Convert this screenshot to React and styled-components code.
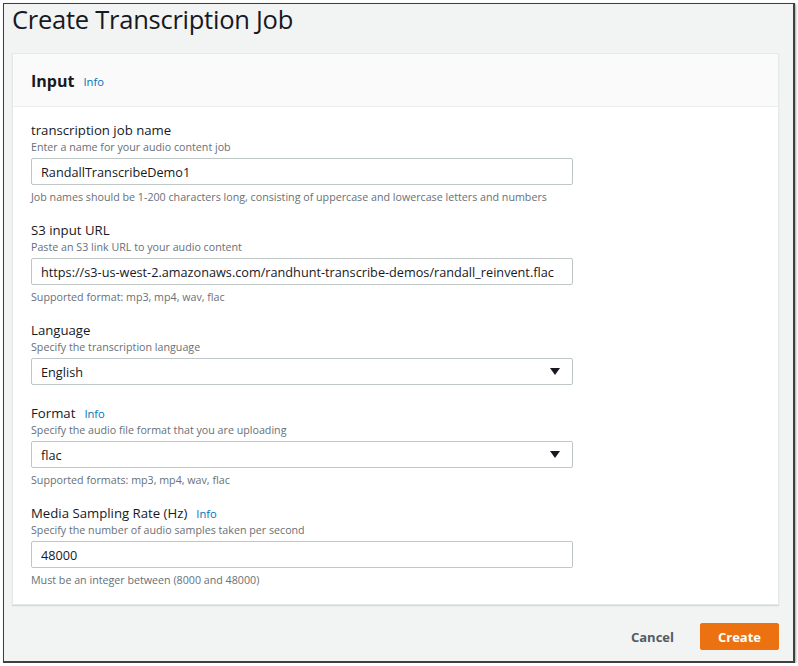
import React from 'react';
import styled, { createGlobalStyle } from 'styled-components';

const GlobalStyle = createGlobalStyle`
  html, body {
    margin: 0;
    padding: 0;
    background: #ffffff;
  }
  body {
    font-family: "Open Sans", "Liberation Sans", sans-serif;
    color: #16191f;
  }
`;

const fields = [
  {
    label: 'transcription job name',
    hint: 'Enter a name for your audio content job',
    value: 'RandallTranscribeDemo1',
    help: 'Job names should be 1-200 characters long, consisting of uppercase and lowercase letters and numbers',
  },
  {
    label: 'S3 input URL',
    hint: 'Paste an S3 link URL to your audio content',
    value: 'https://s3-us-west-2.amazonaws.com/randhunt-transcribe-demos/randall_reinvent.flac',
    help: 'Supported format: mp3, mp4, wav, flac',
  },
  {
    label: 'Language',
    hint: 'Specify the transcription language',
    value: 'English',
    select: true,
  },
  {
    label: 'Format',
    info: true,
    hint: 'Specify the audio file format that you are uploading',
    value: 'flac',
    select: true,
    help: 'Supported formats: mp3, mp4, wav, flac',
  },
  {
    label: 'Media Sampling Rate (Hz)',
    info: true,
    hint: 'Specify the number of audio samples taken per second',
    value: '48000',
    help: 'Must be an integer between (8000 and 48000)',
  },
];

const App = () => {
  return (
    <>
      <GlobalStyle />
      <Frame>
        <Title>Create Transcription Job</Title>
        <Panel>
          <PanelHeader>
            <PanelTitle>Input</PanelTitle>
            <InfoLink>Info</InfoLink>
          </PanelHeader>
          <PanelBody>
            {fields.map(field => (
              <Field key={field.label} $bare={!field.help}>
                <Label>
                  {field.label}
                  {field.info && <InfoLink>Info</InfoLink>}
                </Label>
                <Hint>{field.hint}</Hint>
                <InputBox>
                  <Value>{field.value}</Value>
                  {field.select && <Caret />}
                </InputBox>
                {field.help && <Help>{field.help}</Help>}
              </Field>
            ))}
          </PanelBody>
        </Panel>
        <Footer>
          <CancelButton>Cancel</CancelButton>
          <CreateButton>Create</CreateButton>
        </Footer>
      </Frame>
    </>
  );
};

const Frame = styled.div`
  box-sizing: border-box;
  margin: 3px 0 0 3px;
  width: 792px;
  height: 660px;
  border: 1px solid #3f3f3f;
  border-width: 1px 2px 2px 1px;
  box-shadow: 1px 1px 2px rgba(0, 0, 0, 0.35);
  background: #f2f3f3;
  padding: 0 14px 0 8px;
  display: flex;
  flex-direction: column;
`;

const Title = styled.h1`
  margin: 0;
  height: 49px;
  font-size: 25.5px;
  font-weight: 400;
  line-height: 30px;
  color: #16191f;
  letter-spacing: -0.25px;
`;

const Panel = styled.div`
  background: #ffffff;
  border: 1px solid #e6e9e9;
  box-shadow: 0 1px 1px rgba(0, 28, 36, 0.12);
`;

const PanelHeader = styled.div`
  height: 53px;
  box-sizing: border-box;
  background: #fafafa;
  border-bottom: 1px solid #eaeded;
  display: flex;
  align-items: center;
  padding: 2px 18px 0;
`;

const PanelTitle = styled.h2`
  margin: 0;
  font-size: 16px;
  font-weight: 700;
  color: #16191f;
`;

const InfoLink = styled.a`
  margin-left: 9px;
  font-size: 11.2px;
  color: #0073bb;
  font-weight: 400;
`;

const PanelBody = styled.div`
  padding: 14px 18px 16px;
  display: flex;
  flex-direction: column;
  gap: 16px;
`;

const Field = styled.div`
  display: flex;
  flex-direction: column;
  padding-bottom: ${p => (p.$bare ? '3px' : '0')};
`;

const Label = styled.div`
  font-size: 13.2px;
  line-height: 19px;
  color: #16191f;
  display: flex;
  align-items: baseline;
`;

const Hint = styled.div`
  font-size: 10.7px;
  line-height: 15px;
  color: #687078;
`;

const InputBox = styled.div`
  box-sizing: border-box;
  margin-top: 3px;
  width: 542px;
  height: 27px;
  border: 1px solid #bfc6c6;
  border-radius: 2px;
  background: #ffffff;
  display: flex;
  align-items: center;
  justify-content: space-between;
  padding: 0 12px 0 9px;
  font-size: 12.7px;
  color: #16191f;
`;

const Value = styled.span`
  white-space: nowrap;
  overflow: hidden;
`;

const Caret = styled.span`
  flex: none;
  width: 0;
  height: 0;
  border-left: 5px solid transparent;
  border-right: 5px solid transparent;
  border-top: 7px solid #16191f;
`;

const Help = styled.div`
  margin-top: 5px;
  font-size: 10.7px;
  line-height: 15px;
  color: #687078;
`;

const Footer = styled.div`
  display: flex;
  justify-content: flex-end;
  align-items: center;
  gap: 26px;
  padding-top: 18px;
`;

const CancelButton = styled.button`
  border: none;
  background: none;
  padding: 0;
  font-family: inherit;
  font-size: 13px;
  font-weight: 700;
  color: #545b64;
`;

const CreateButton = styled.button`
  box-sizing: border-box;
  width: 79px;
  height: 27px;
  border: 1px solid #ec7211;
  border-radius: 2px;
  background: #ec7211;
  font-family: inherit;
  font-size: 13px;
  font-weight: 700;
  color: #ffffff;
`;

export default App;
